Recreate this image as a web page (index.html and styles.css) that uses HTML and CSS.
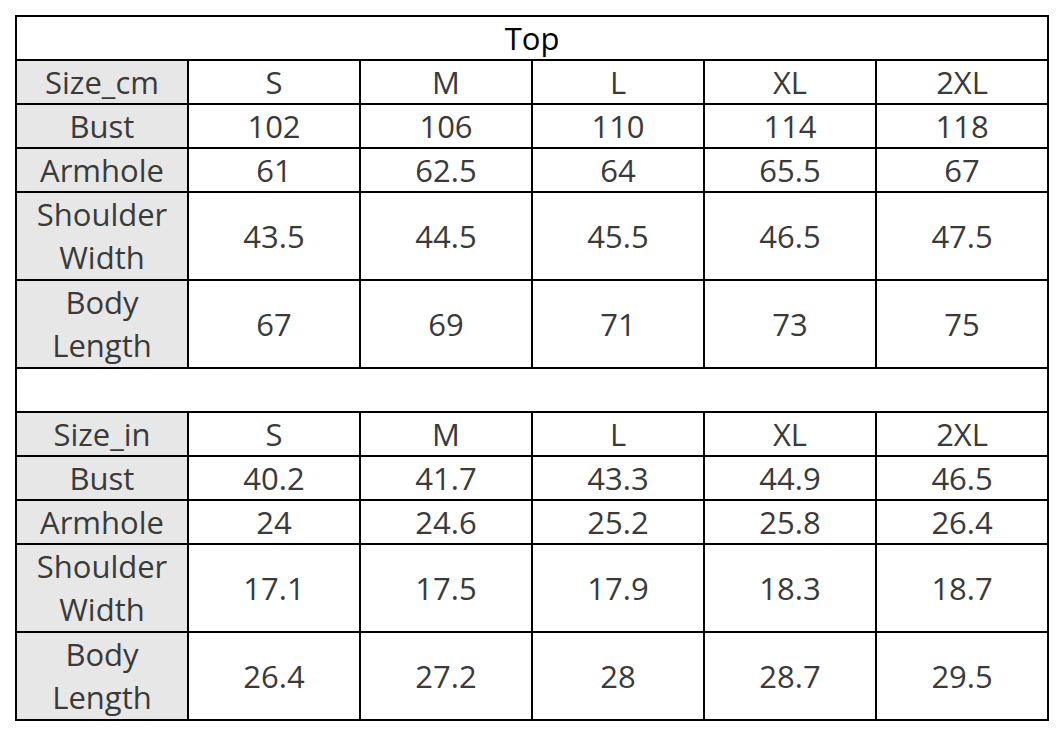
FILE: index.html
```html
<!DOCTYPE html>
<html>
<head>
<meta charset="utf-8">
<link rel="stylesheet" href="styles.css">
</head>
<body>
<table class="size-table">
  <colgroup>
    <col class="c"><col class="c"><col class="c"><col class="c"><col class="c"><col class="c">
  </colgroup>
  <tr class="r1"><td class="title" colspan="6">Top</td></tr>
  <tr class="r1"><td class="lbl">Size_cm</td><td>S</td><td>M</td><td>L</td><td>XL</td><td>2XL</td></tr>
  <tr class="r1"><td class="lbl">Bust</td><td>102</td><td>106</td><td>110</td><td>114</td><td>118</td></tr>
  <tr class="r1"><td class="lbl">Armhole</td><td>61</td><td>62.5</td><td>64</td><td>65.5</td><td>67</td></tr>
  <tr class="r2"><td class="lbl">Shoulder<br>Width</td><td>43.5</td><td>44.5</td><td>45.5</td><td>46.5</td><td>47.5</td></tr>
  <tr class="r2"><td class="lbl">Body<br>Length</td><td>67</td><td>69</td><td>71</td><td>73</td><td>75</td></tr>
  <tr class="r1"><td class="blank" colspan="6"></td></tr>
  <tr class="r1"><td class="lbl">Size_in</td><td>S</td><td>M</td><td>L</td><td>XL</td><td>2XL</td></tr>
  <tr class="r1"><td class="lbl">Bust</td><td>40.2</td><td>41.7</td><td>43.3</td><td>44.9</td><td>46.5</td></tr>
  <tr class="r1"><td class="lbl">Armhole</td><td>24</td><td>24.6</td><td>25.2</td><td>25.8</td><td>26.4</td></tr>
  <tr class="r2"><td class="lbl">Shoulder<br>Width</td><td>17.1</td><td>17.5</td><td>17.9</td><td>18.3</td><td>18.7</td></tr>
  <tr class="r2"><td class="lbl">Body<br>Length</td><td>26.4</td><td>27.2</td><td>28</td><td>28.7</td><td>29.5</td></tr>
</table>
</body>
</html>
```
FILE: styles.css
```css
html, body {
  margin: 0;
  padding: 0;
  background: #ffffff;
}
body {
  padding: 15px 0 0 15px;
}
.size-table {
  border-collapse: collapse;
  table-layout: fixed;
  width: 1034px;
  font-family: "Open Sans", "Noto Sans", sans-serif;
  font-size: 31px;
  color: #3a3a3a;
}
.size-table col.c {
  width: 172px;
}
.size-table td {
  border: 2px solid #000;
  text-align: center;
  vertical-align: middle;
  padding: 0;
  line-height: 42px;
  overflow: hidden;
  white-space: nowrap;
}
.r1 { height: 44px; }
.r2 { height: 88px; }
.size-table .r2 td.lbl {
  line-height: 43px;
}
.size-table td.lbl {
  background: #e7e7e7;
}
.size-table td.title {
  color: #000;
}
```
